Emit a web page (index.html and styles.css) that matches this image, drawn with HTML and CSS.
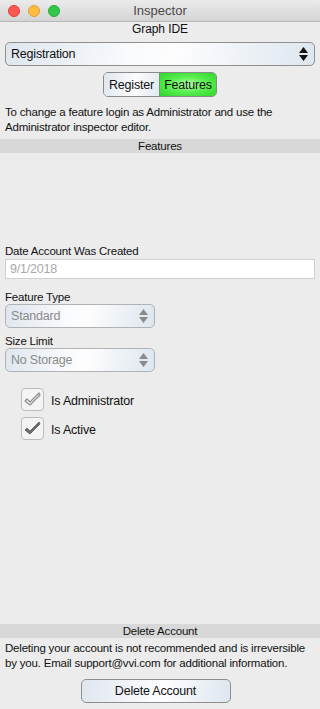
FILE: index.html
```html
<!DOCTYPE html>
<html lang="en">
<head>
    <meta charset="UTF-8">
    <meta name="viewport" content="width=device-width, initial-scale=1.0">
    <title>Inspector</title>
    <link rel="stylesheet" href="styles.css">
</head>
<body>
    <div class="window">
        <div class="titlebar">
            <div class="lights">
                <span class="light red"></span>
                <span class="light yellow"></span>
                <span class="light green"></span>
            </div>
            <div class="title">Inspector</div>
        </div>

        <div class="app-name">Graph IDE</div>

        <div class="popup popup-main">
            <span class="popup-text">Registration</span>
            <svg class="arrows" width="9" height="14" viewBox="0 0 9 14">
                <path d="M4.5 0 L9 6 L0 6 Z M0 8 L9 8 L4.5 14 Z" fill="#111"/>
            </svg>
        </div>

        <div class="segmented">
            <span class="seg">Register</span>
            <span class="seg seg-on">Features</span>
        </div>

        <p class="info">To change a feature login as Administrator and use the Administrator inspector editor.</p>

        <div class="band">Features</div>

        <div class="fields">
            <label class="field-label">Date Account Was Created</label>
            <div class="textfield">9/1/2018</div>

            <label class="field-label label-gap">Feature Type</label>
            <div class="popup popup-small">
                <span class="popup-text">Standard</span>
                <svg class="arrows" width="9" height="14" viewBox="0 0 9 14">
                    <path d="M4.5 0 L9 6 L0 6 Z M0 8 L9 8 L4.5 14 Z" fill="#8a8a8a"/>
                </svg>
            </div>

            <label class="field-label label-gap-sm">Size Limit</label>
            <div class="popup popup-small">
                <span class="popup-text">No Storage</span>
                <svg class="arrows" width="9" height="14" viewBox="0 0 9 14">
                    <path d="M4.5 0 L9 6 L0 6 Z M0 8 L9 8 L4.5 14 Z" fill="#8a8a8a"/>
                </svg>
            </div>

            <div class="checks">
                <div class="check-row">
                    <span class="checkbox">
                        <svg width="17" height="15" viewBox="0 0 17 15">
                            <path d="M1 9 L3 7 L6 10 L15 1 L16 3 L6 13 Z" fill="none" stroke="#8f8f8f" stroke-width="1.2" stroke-linejoin="round"/>
                        </svg>
                    </span>
                    <span class="check-label">Is Administrator</span>
                </div>
                <div class="check-row">
                    <span class="checkbox">
                        <svg width="17" height="15" viewBox="0 0 17 15">
                            <path d="M1 9 L3 7 L6 10 L15 1 L16 3 L6 13 Z" fill="#6a6a6a" stroke="#6a6a6a" stroke-width="1" stroke-linejoin="round"/>
                        </svg>
                    </span>
                    <span class="check-label">Is Active</span>
                </div>
            </div>
        </div>

        <div class="spacer"></div>

        <div class="band">Delete Account</div>
        <p class="warning">Deleting your account is not recommended and is irreversible by you. Email support@vvi.com for additional information.</p>
        <div class="button-row">
            <button class="push-button">Delete Account</button>
        </div>
    </div>
</body>
</html>
```

FILE: styles.css
```css
* {
    box-sizing: border-box;
    margin: 0;
    padding: 0;
}

body {
    background-color: #ececec;
    color: #111;
    font-family: 'Liberation Sans', Arial, sans-serif;
    font-size: 11.5px;
    letter-spacing: -0.2px;
}

.window {
    display: flex;
    flex-direction: column;
    width: 320px;
    height: 709px;
    background-color: #ececec;
}

.titlebar {
    position: relative;
    height: 22px;
    background: linear-gradient(#ebebeb, #d4d4d4);
    border-bottom: 1px solid #b8b8b8;
    border-radius: 5px 5px 0 0;
}

.lights {
    display: flex;
    gap: 8px;
    padding: 5px 0 0 8px;
}

.light {
    width: 12px;
    height: 12px;
    border-radius: 50%;
}

.red {
    background-color: #fc5753;
    border: 1px solid #df3d39;
}

.yellow {
    background-color: #fdbc40;
    border: 1px solid #de9f34;
}

.green {
    background-color: #33c748;
    border: 1px solid #27aa35;
}

.title {
    position: absolute;
    top: 0;
    left: 0;
    right: 0;
    line-height: 22px;
    text-align: center;
    font-size: 13px;
    letter-spacing: 0;
    color: #4a4a4a;
}

.app-name {
    height: 20px;
    line-height: 15px;
    text-align: center;
    font-size: 12px;
    letter-spacing: -0.1px;
}

.popup {
    display: flex;
    align-items: center;
    justify-content: space-between;
    height: 24px;
    padding: 0 6px 0 5px;
    border: 1px solid #8f8f8f;
    border-radius: 5px;
    background: linear-gradient(100deg, #dfe6ee 0%, #f8fafc 40%, #fdfdfe 55%, #dde6ef 100%);
    font-size: 12.5px;
}

.popup-main {
    margin: 0 5px;
}

.popup-small {
    width: 150px;
    margin-left: 5px;
    border-color: #b2b2b2;
    color: #8a8a8a;
}

.segmented {
    display: flex;
    align-self: center;
    width: 114px;
    height: 25px;
    margin-top: 6px;
    border: 1px solid #8a8a8a;
    border-radius: 5px;
    overflow: hidden;
    font-size: 12.5px;
}

.seg {
    display: flex;
    align-items: center;
    justify-content: center;
    width: 56px;
    background: linear-gradient(100deg, #dfe6ee, #fbfcfd 55%, #e3e9f0);
}

.seg-on {
    width: 58px;
    border-left: 1px solid #6a9a6a;
    background: radial-gradient(ellipse at center, #b8ffb0 0%, #5cf052 45%, #2fd42a 100%);
}

.info {
    margin-top: 8px;
    padding: 0 5px;
    line-height: 15px;
}

.band {
    height: 14px;
    margin-top: 4px;
    line-height: 14px;
    background-color: #d8d8d8;
    text-align: center;
}

.fields {
    display: flex;
    flex-direction: column;
    padding-top: 91px;
}

.field-label {
    padding-left: 5px;
    line-height: 14px;
}

.label-gap {
    margin-top: 11px;
}

.label-gap-sm {
    margin-top: 6px;
}

.textfield {
    height: 20px;
    margin: 1px 5px 0;
    padding-left: 4px;
    line-height: 19px;
    background-color: #fff;
    border: 1px solid #d0d0d0;
    color: #a8a8a8;
    font-size: 12.5px;
}

.checks {
    display: flex;
    flex-direction: column;
    gap: 6px;
    margin-top: 16px;
    padding-left: 21px;
}

.check-row {
    display: flex;
    align-items: center;
    gap: 7px;
}

.checkbox {
    display: flex;
    align-items: center;
    justify-content: center;
    width: 23px;
    height: 23px;
    border: 1px solid #bcbcbc;
    border-radius: 4px;
    background-color: #f4f4f4;
}

.check-label {
    margin-top: 3px;
    font-size: 12.5px;
}

.spacer {
    flex: 1;
}

.band + .warning {
    margin-top: 3px;
}

.warning {
    padding: 0 5px;
    line-height: 15px;
}

.button-row {
    display: flex;
    justify-content: center;
    padding: 8px 0 6px;
}

.push-button {
    width: 150px;
    height: 24px;
    margin-right: 9px;
    border: 1px solid #8f8f8f;
    border-radius: 5px;
    background: linear-gradient(100deg, #dfe6ee 0%, #f8fafc 45%, #fdfdfe 55%, #dde6ef 100%);
    font-family: 'Liberation Sans', Arial, sans-serif;
    font-size: 12.5px;
    letter-spacing: -0.2px;
    color: #111;
}
```
